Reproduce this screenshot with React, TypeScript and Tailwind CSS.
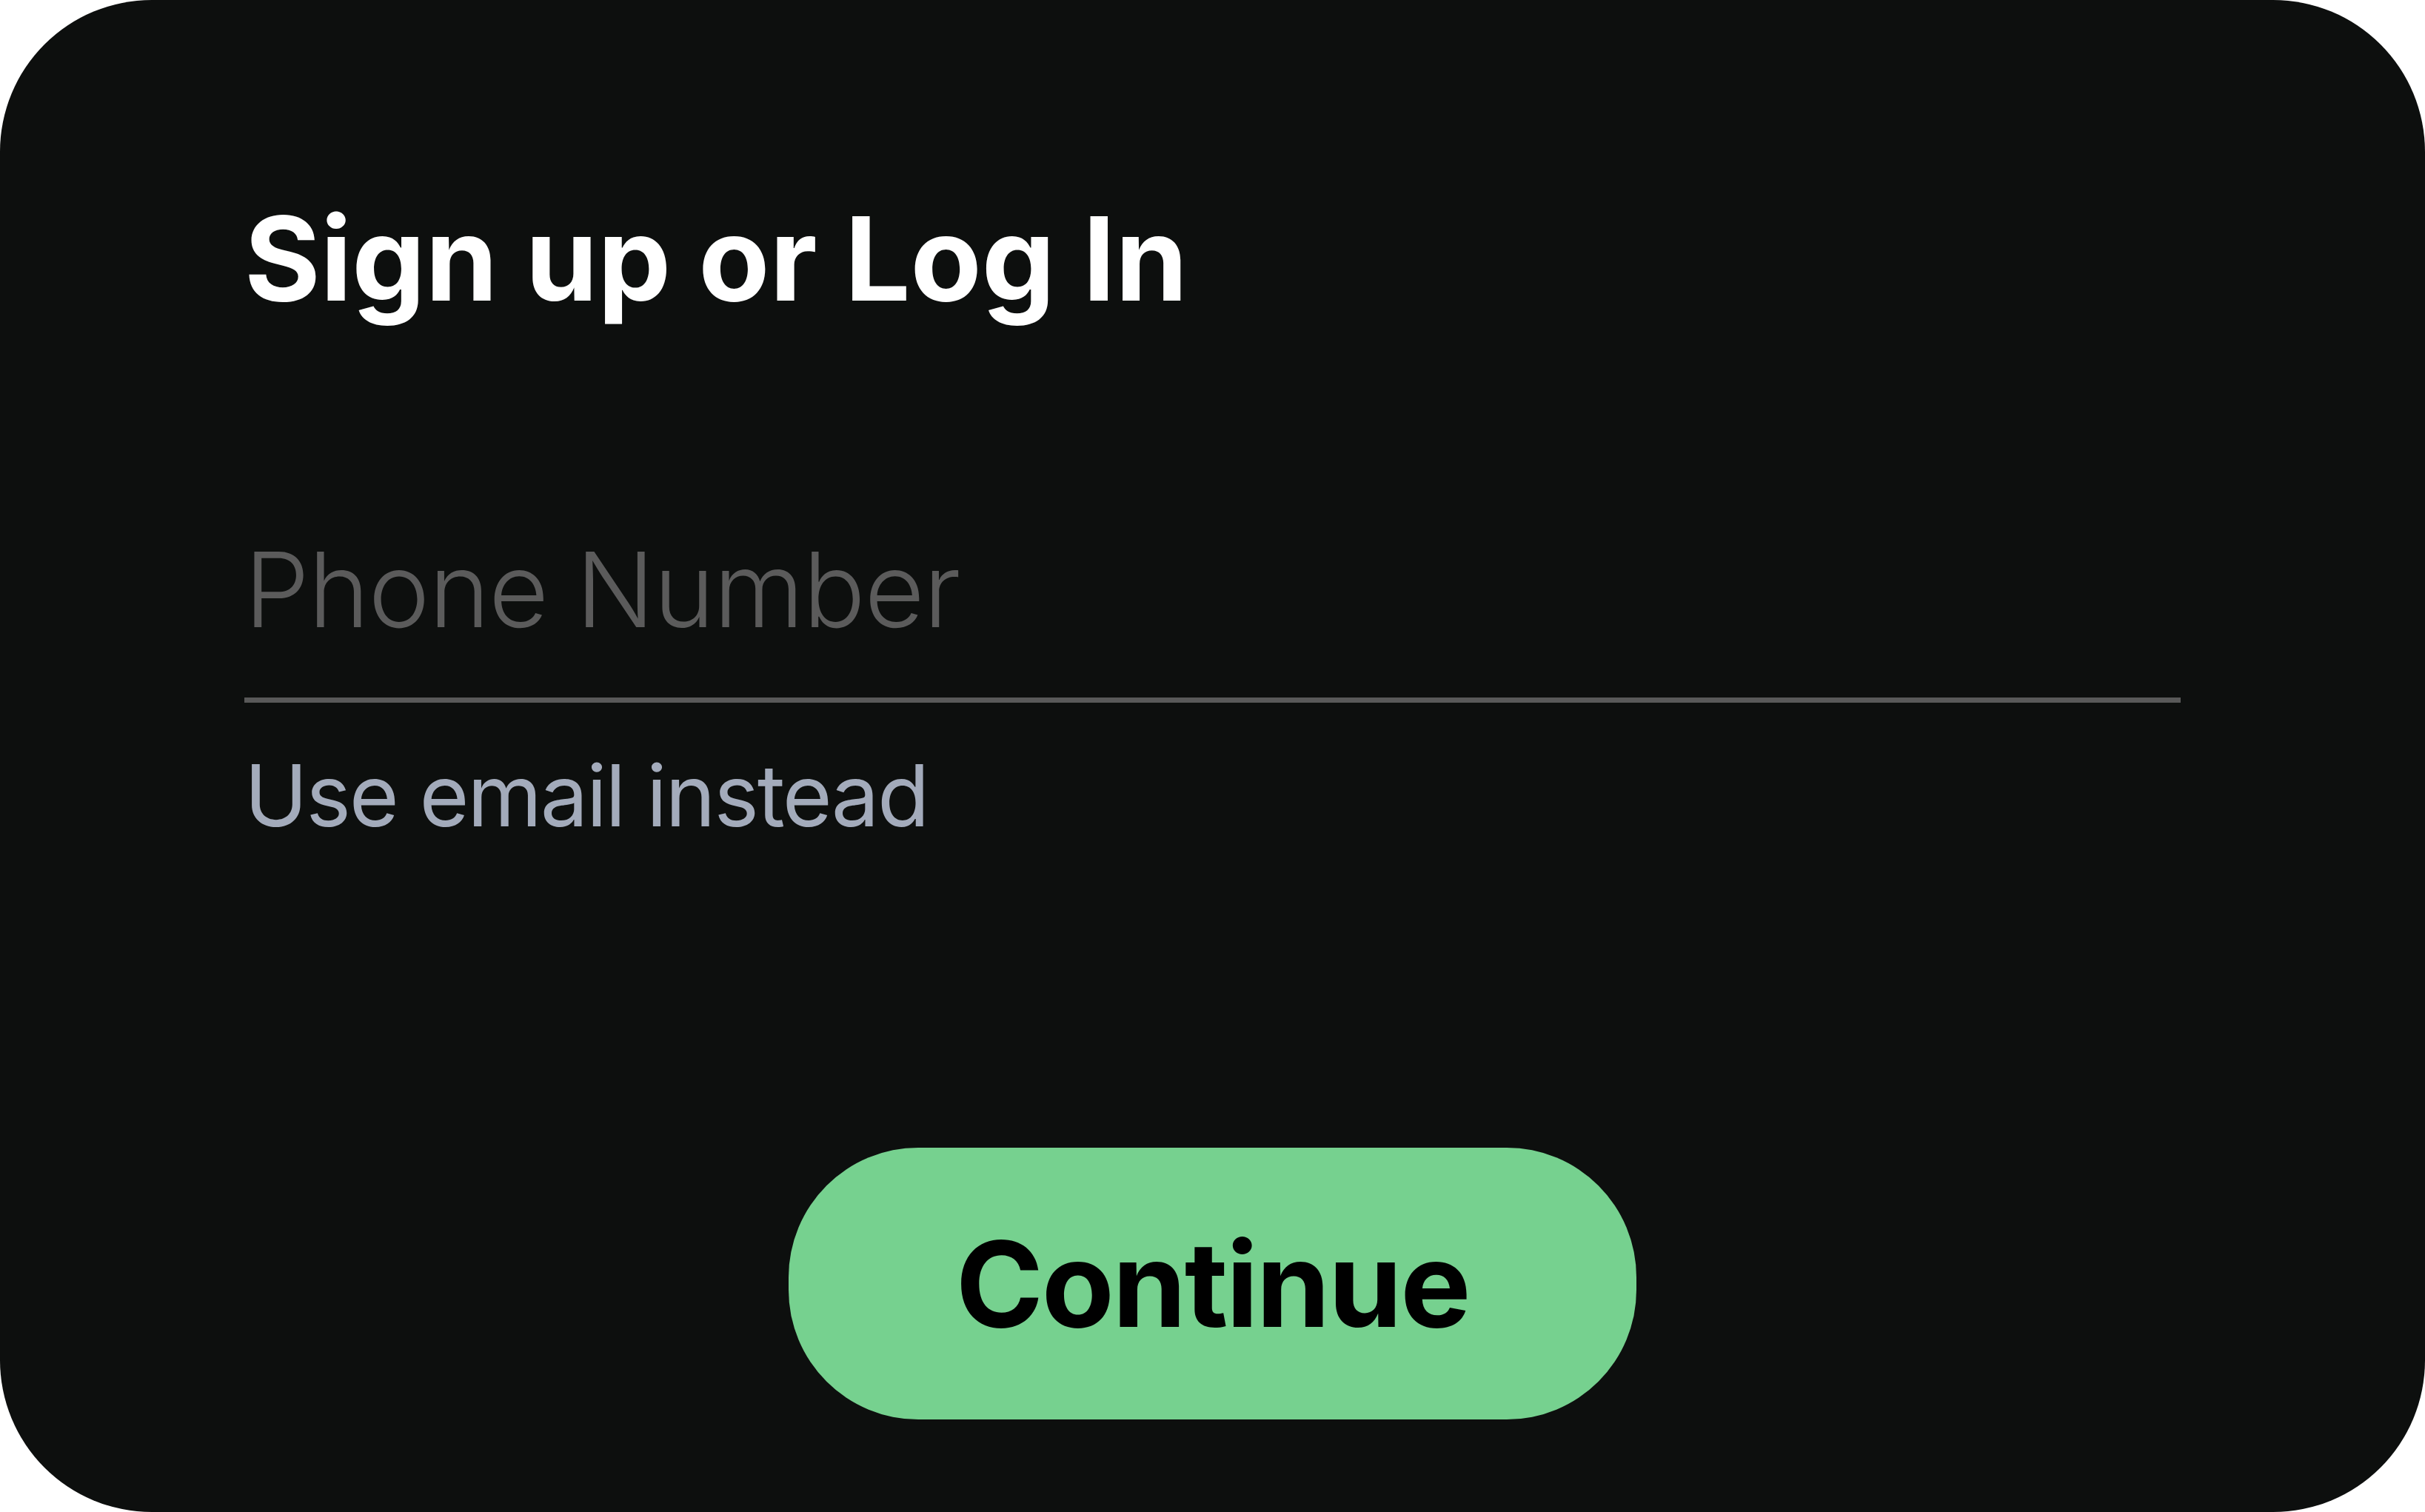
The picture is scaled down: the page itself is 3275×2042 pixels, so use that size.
export default function App() {
  return (
    <div className="w-[3275px] h-[2042px] bg-white">
      <div
        className="w-full h-full rounded-[205px] bg-[#0d0f0e] flex flex-col pt-[271px] px-[330px]"
        style={{ fontFamily: "Inter, 'Noto Sans', sans-serif" }}
      >
        <h1 className="text-[157px] leading-none font-bold text-white">
          Sign up or Log In
        </h1>

        <div className="mt-[298px] border-b-[7px] border-[#595959] pb-[76px]">
          <div className="text-[140px] leading-none font-light text-[#5b5b5b] tracking-[-0.01em]">
            Phone Number
          </div>
        </div>

        <button className="self-start mt-[68px] text-[115px] leading-none text-[#a3abbb] text-left tracking-[-0.02em]">
          Use email instead
        </button>

        <div className="flex justify-center mt-[418px] -mx-[330px]">
          <button className="w-[1145px] h-[367px] rounded-[175px] bg-[#76d18f] flex items-center justify-center">
            <span className="text-[160px] leading-none font-bold text-black tracking-[-0.015em]">
              Continue
            </span>
          </button>
        </div>
      </div>
    </div>
  );
}
